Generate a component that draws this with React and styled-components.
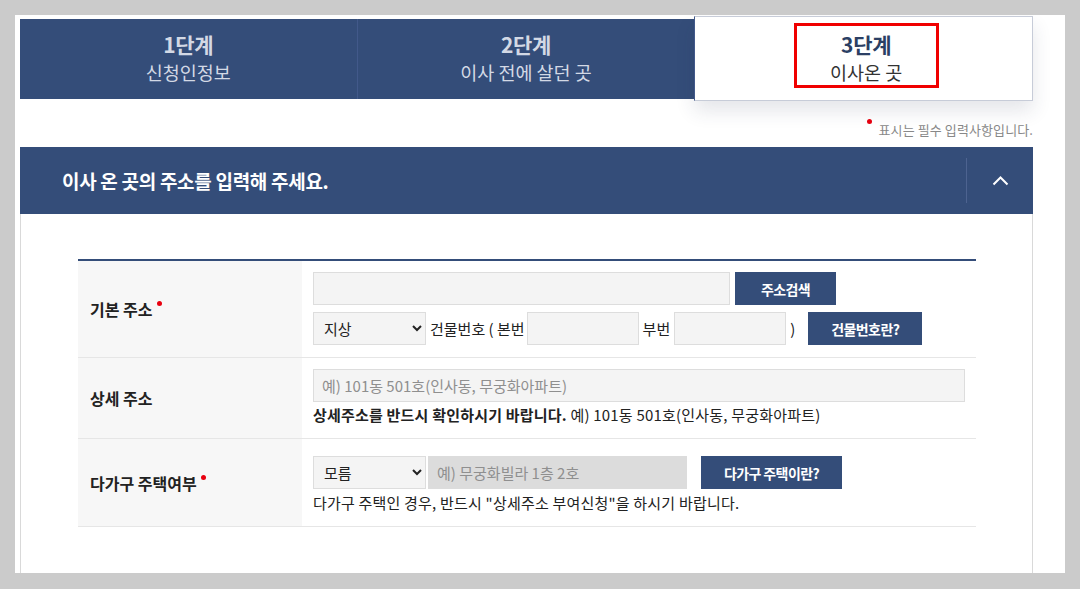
import React from "react";
import styled, { createGlobalStyle } from "styled-components";

const navy = "#344d79";

const GlobalStyle = createGlobalStyle`
  html, body {
    margin: 0;
    background: #cbcbcb;
  }
  body {
    font-family: "Noto Sans CJK KR", "Noto Sans", sans-serif;
    color: #222;
  }
`;

const Page = styled.div`
  height: 589px;
  padding: 15px 15px 0;
  box-sizing: border-box;
  overflow: hidden;
`;
const Card = styled.div`
  background: #fff;
  height: 558px;
  padding: 4px 32px 0 5px;
  box-sizing: border-box;
  overflow: hidden;
`;
const Tabs = styled.div`
  display: flex;
  height: 80px;
  background: ${navy};
`;
const Tab = styled.div`
  flex: 1;
  display: flex;
  flex-direction: column;
  align-items: center;
  box-sizing: border-box;
  padding-top: 4px;
  color: #d3d9e5;
  & + & {
    border-left: 1px solid #42598a;
  }
  ${(p) =>
    p.$active &&
    `
    position: relative;
    z-index: 1;
    background: #fff;
    margin: -3px 0 -2px;
    padding-top: 6px;
    border: 1px solid #c7ccd8;
    box-shadow: 0 10px 18px rgba(40, 50, 80, 0.12);
    color: #333;
  `}
`;
const StepBox = styled.div`
  width: 145px;
  height: 65px;
  box-sizing: border-box;
  border: 3px solid ${(p) => (p.$marked ? "#f00000" : "transparent")};
  margin-left: ${(p) => (p.$marked ? 5 : 0)}px;
  padding-top: 5px;
  text-align: center;
`;
const StepNo = styled.div`
  font-size: 21px;
  font-weight: 700;
  line-height: 26px;
  letter-spacing: -0.3px;
  color: ${(p) => (p.$active ? "#2b3f64" : "inherit")};
`;
const StepName = styled.div`
  font-size: 18.5px;
  line-height: 26px;
  margin-top: 2px;
  white-space: nowrap;
`;
const Note = styled.div`
  height: 48px;
  box-sizing: border-box;
  padding-top: 12px;
  display: flex;
  justify-content: flex-end;
  align-items: center;
  font-size: 13px;
  color: #888;
  letter-spacing: 0.1px;
`;
const Dot = styled.span`
  display: inline-block;
  width: 5px;
  height: 5px;
  border-radius: 50%;
  background: #e8000f;
`;
const NoteDot = styled(Dot)`
  align-self: flex-start;
  margin: 8px 7px 0 0;
`;
const Header = styled.div`
  height: 67px;
  background: ${navy};
  display: flex;
  align-items: center;
  padding-left: 42px;
`;
const HeaderTitle = styled.h2`
  flex: 1;
  margin: 0;
  font-size: 19px;
  font-weight: 700;
  color: #fff;
  letter-spacing: -0.3px;
`;
const Toggle = styled.div`
  width: 67px;
  height: 45px;
  box-sizing: border-box;
  border-left: 1px solid #4d6390;
  display: flex;
  align-items: center;
  justify-content: center;
`;
const Body = styled.div`
  border-left: 1px solid #d9d9d9;
  border-right: 1px solid #d9d9d9;
  padding: 45px 56px 60px 57px;
`;
const Table = styled.table`
  width: 100%;
  border-collapse: collapse;
  border-top: 2px solid ${navy};
`;
const Row = styled.tr`
  border-bottom: 1px solid #e6e6e6;
`;
const Label = styled.th`
  width: 224px;
  box-sizing: border-box;
  background: #f7f7f7;
  padding-left: 12px;
  text-align: left;
  font-size: 16px;
  font-weight: 700;
  vertical-align: middle;
  color: #222;
  white-space: nowrap;
`;
const ReqDot = styled(Dot)`
  position: relative;
  top: -10px;
  margin-left: 4px;
`;
const Field = styled.td`
  padding: ${(p) => p.$top || 11}px 11px ${(p) => p.$bottom || 11}px;
  vertical-align: top;
`;
const Line = styled.div`
  display: flex;
  align-items: center;
  gap: 4px;
  margin-top: ${(p) => p.$mt || 0}px;
  font-size: 15px;
  white-space: nowrap;
`;
const Input = styled.input`
  width: ${(p) => (p.$w ? `${p.$w}px` : "100%")};
  height: 33px;
  box-sizing: border-box;
  border: 1px solid ${(p) => (p.$dim ? "#dcdcdc" : "#dddddd")};
  background: ${(p) => (p.$dim ? "#dcdcdc" : "#f4f4f4")};
  padding: 0 8px;
  margin: 0;
  font-family: "Noto Sans CJK KR", sans-serif;
  font-size: 15px;
  outline: none;
  &::placeholder {
    color: #8f8f8f;
  }
`;
const Select = styled.select`
  width: 113px;
  height: 33px;
  box-sizing: border-box;
  border: 1px solid #dddddd;
  border-radius: 0;
  background: #f4f4f4;
  padding: 0 6px;
  margin: 0;
  font-family: "Noto Sans CJK KR", sans-serif;
  font-size: 15px;
  color: #222;
`;
const Btn = styled.button`
  width: ${(p) => p.$w}px;
  height: 33px;
  margin: 0 0 0 ${(p) => p.$ml || 0}px;
  border: 0;
  background: ${navy};
  color: #fff;
  font-family: "Noto Sans CJK KR", sans-serif;
  font-size: 14px;
  font-weight: 700;
  letter-spacing: -0.6px;
  padding: 0;
`;
const Help = styled.div`
  margin-top: ${(p) => p.$mt || 1}px;
  font-size: 15px;
  line-height: 24px;
  letter-spacing: 0.2px;
  color: #222;
  white-space: nowrap;
  b {
    font-weight: 700;
  }
`;

const ChevronUp = () => (
  <svg width="17" height="11" viewBox="0 0 17 11" fill="none">
    <polyline points="1.5,9.5 8.5,2.5 15.5,9.5" stroke="#fff" strokeWidth="2" />
  </svg>
);

const steps = [
  { no: "1단계", name: "신청인정보" },
  { no: "2단계", name: "이사 전에 살던 곳" },
  { no: "3단계", name: "이사온 곳", active: true },
];

export default function App() {
  return (
    <Page>
      <GlobalStyle />
      <Card>
        <Tabs>
          {steps.map((s) => (
            <Tab key={s.no} $active={s.active}>
              <StepBox $marked={s.active}>
                <StepNo $active={s.active}>{s.no}</StepNo>
                <StepName>{s.name}</StepName>
              </StepBox>
            </Tab>
          ))}
        </Tabs>
        <Note>
          <NoteDot />
          표시는 필수 입력사항입니다.
        </Note>
        <Header>
          <HeaderTitle>이사 온 곳의 주소를 입력해 주세요.</HeaderTitle>
          <Toggle>
            <ChevronUp />
          </Toggle>
        </Header>
        <Body>
          <Table>
            <tbody>
              <Row>
                <Label>
                  기본 주소
                  <ReqDot />
                </Label>
                <Field $bottom={12}>
                  <Line>
                    <Input $w={417} readOnly />
                    <Btn $w={101} $ml={1}>주소검색</Btn>
                  </Line>
                  <Line $mt={7}>
                    <Select defaultValue="지상">
                      <option>지상</option>
                      <option>지하</option>
                    </Select>
                    <span>건물번호 ( 본번</span>
                    <Input $w={112} style={{ marginLeft: -2 }} />
                    <span>부번</span>
                    <Input $w={112} />
                    <span>)</span>
                    <Btn $w={114} $ml={9}>건물번호란?</Btn>
                  </Line>
                </Field>
              </Row>
              <Row>
                <Label>상세 주소</Label>
                <Field>
                  <Line>
                    <Input placeholder="예) 101동 501호(인사동, 무궁화아파트)" />
                  </Line>
                  <Help>
                    <b>상세주소를 반드시 확인하시기 바랍니다.</b> 예) 101동 501호(인사동, 무궁화아파트)
                  </Help>
                </Field>
              </Row>
              <Row>
                <Label>
                  다가구 주택여부
                  <ReqDot />
                </Label>
                <Field $top={17}>
                  <Line>
                    <Select defaultValue="모름">
                      <option>모름</option>
                      <option>예</option>
                      <option>아니오</option>
                    </Select>
                    <Input $w={259} $dim placeholder="예) 무궁화빌라 1층 2호" disabled style={{ marginLeft: -2 }} />
                    <Btn $w={141} $ml={10}>다가구 주택이란?</Btn>
                  </Line>
                  <Help $mt={2}>
                    다가구 주택인 경우, 반드시 "상세주소 부여신청"을 하시기 바랍니다.
                  </Help>
                </Field>
              </Row>
            </tbody>
          </Table>
        </Body>
      </Card>
    </Page>
  );
}
